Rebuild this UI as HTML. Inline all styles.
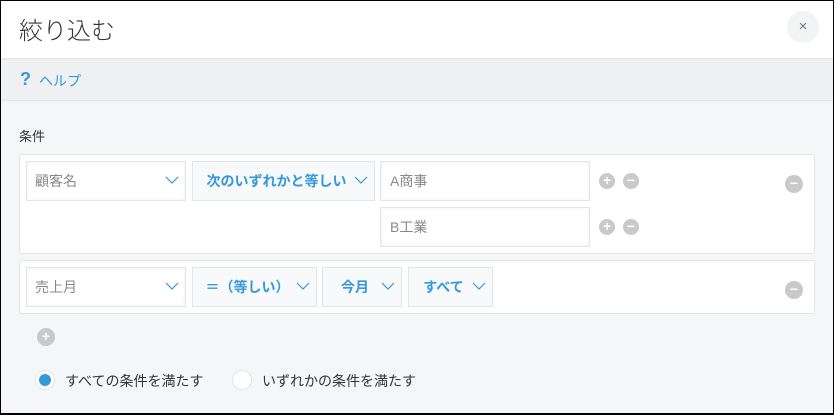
<!DOCTYPE html>
<html><head><meta charset="utf-8"><style>
*{box-sizing:border-box;margin:0;padding:0}
body{width:834px;height:415px;overflow:hidden;font-family:"Liberation Sans","Noto Sans CJK JP",sans-serif;background:#000}
.wrap{position:absolute;left:1px;top:1px;width:832px;height:412px;background:#f5f6f8}
.hd{position:absolute;left:0;top:0;width:832px;height:58px;background:#fff;border-bottom:1px solid #e3e5e8}
.ttl{position:absolute;left:18px;top:10px;font-size:24px;color:#333;font-weight:300}
.cls{position:absolute;left:786px;top:10px;width:32px;height:32px;border-radius:50%;background:#f2f3f5;color:#777;text-align:center;line-height:31px;font-size:15px}
.hb{position:absolute;left:0;top:58px;width:832px;height:42px;background:#eef0f2;border-bottom:1px solid #e3e5e8;color:#3498db;font-size:14px}
.hb span{position:absolute;top:12px}
.lbl{position:absolute;left:18px;top:125px;font-size:13px;color:#333}
.box{position:absolute;left:18px;width:796px;background:#fff;border:1px solid #e3e5e8;border-radius:3px}
.f{position:absolute;height:40px;border:1px solid #e3e5e8;font-size:14px;line-height:38px}
.s1{background:#fff;color:#888;padding-left:8px;box-shadow:inset 0 0 3px #eee}
.s2{background:#f7f9fa;color:#3498db;font-weight:bold;text-align:center;padding-right:14px}
.in{background:#fff;color:#888;padding-left:9px;box-shadow:inset 0 0 3px #eee}
.chev{position:absolute;right:6px;top:14px;width:14px;height:8px}
.ic{position:absolute;width:16px;height:16px;border-radius:50%;background:#c9c9c9;color:#fff;font-size:14px;line-height:15px;text-align:center;font-weight:bold}
.ic.b{width:18px;height:18px;line-height:17px}
.rad{position:absolute;width:20px;height:20px;border-radius:50%;background:#fff;border:1px solid #e3e5e8}
.rad.on::after{content:"";position:absolute;left:3px;top:3px;width:12px;height:12px;border-radius:50%;background:#3498db}
.rt{position:absolute;top:370px;font-size:14px;color:#333}
</style></head><body><div class="wrap">
<div class="hd"><div class="ttl">絞り込む</div><div class="cls">×</div></div>
<div class="hb"><span style="left:19px;top:10px;font-weight:bold;font-size:18px">?</span><span style="left:38px">ヘルプ</span></div>
<div class="lbl">条件</div>
<div class="box" style="top:153px;height:100px"></div>
<div class="box" style="top:259px;height:54px"></div>

<div class="f s1" style="left:25px;top:160px;width:160px">顧客名<svg class="chev" viewBox="0 0 14 8"><path d="M1 1l6 6 6-6" fill="none" stroke="#3498db" stroke-width="1.2"/></svg></div>
<div class="f s2" style="left:191px;top:160px;width:183px">次のいずれかと等しい<svg class="chev" viewBox="0 0 14 8"><path d="M1 1l6 6 6-6" fill="none" stroke="#3498db" stroke-width="1.2"/></svg></div>
<div class="f in" style="left:379px;top:160px;width:210px">A商事</div>
<div class="f in" style="left:379px;top:206px;width:210px">B工業</div>
<div class="ic" style="left:598px;top:172px">+</div><div class="ic" style="left:622px;top:172px">−</div>
<div class="ic" style="left:598px;top:218px">+</div><div class="ic" style="left:622px;top:218px">−</div>
<div class="ic b" style="left:784px;top:174px">−</div>

<div class="f s1" style="left:25px;top:266px;width:160px">売上月<svg class="chev" viewBox="0 0 14 8"><path d="M1 1l6 6 6-6" fill="none" stroke="#3498db" stroke-width="1.2"/></svg></div>
<div class="f s2" style="left:191px;top:266px;width:125px">＝（等しい）<svg class="chev" viewBox="0 0 14 8"><path d="M1 1l6 6 6-6" fill="none" stroke="#3498db" stroke-width="1.2"/></svg></div>
<div class="f s2" style="left:321px;top:266px;width:80px">今月<svg class="chev" viewBox="0 0 14 8"><path d="M1 1l6 6 6-6" fill="none" stroke="#3498db" stroke-width="1.2"/></svg></div>
<div class="f s2" style="left:407px;top:266px;width:85px">すべて<svg class="chev" viewBox="0 0 14 8"><path d="M1 1l6 6 6-6" fill="none" stroke="#3498db" stroke-width="1.2"/></svg></div>
<div class="ic b" style="left:784px;top:280px">−</div>
<div class="ic b" style="left:36px;top:327px">+</div>

<div class="rad on" style="left:34px;top:369px"></div><div class="rt" style="left:64px">すべての条件を満たす</div>
<div class="rad" style="left:231px;top:369px"></div><div class="rt" style="left:261px">いずれかの条件を満たす</div>
</div></body></html>
